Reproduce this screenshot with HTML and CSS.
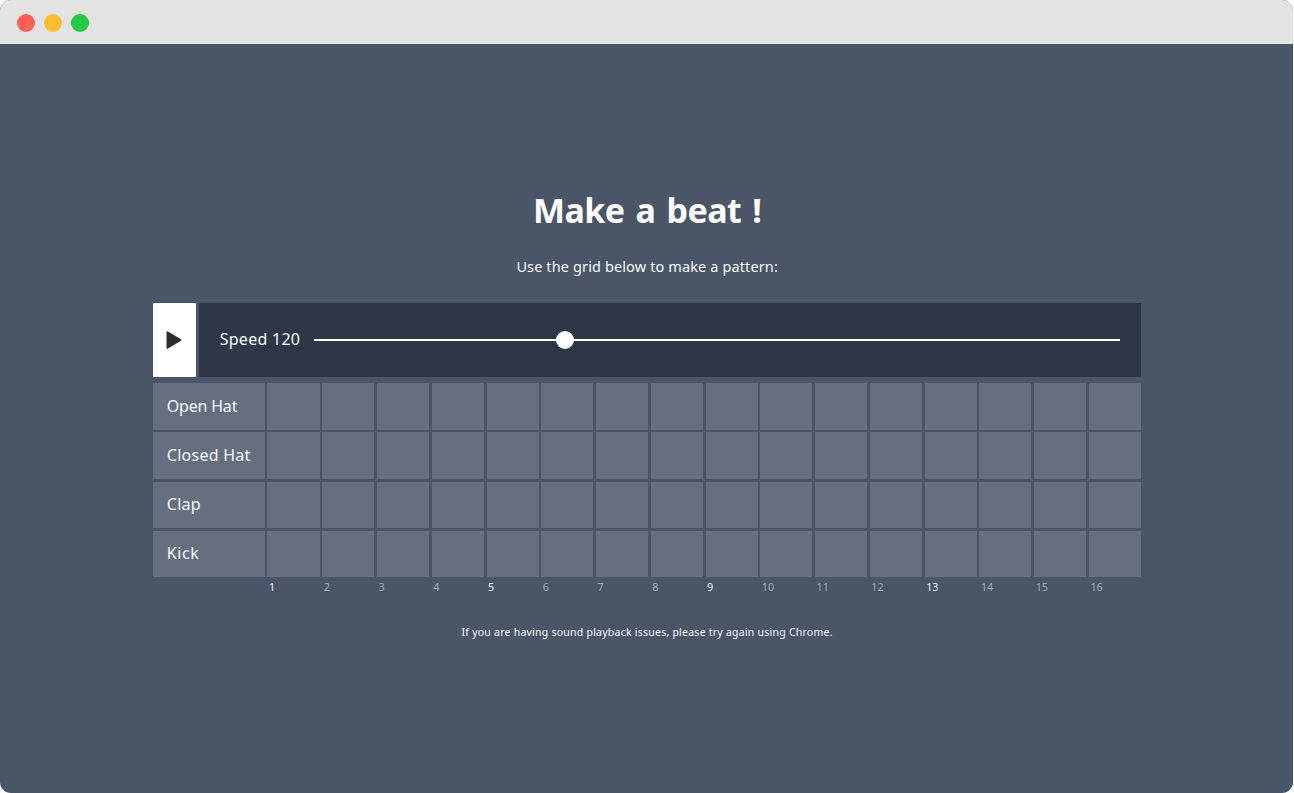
FILE: index.html
```
<!DOCTYPE html>
<html lang="en">
<head>
<meta charset="utf-8">
<title>Make a beat</title>
<link rel="stylesheet" href="styles.css">
</head>
<body>
<div class="window">
  <header class="titlebar">
    <span class="dot dot-close"></span>
    <span class="dot dot-minimize"></span>
    <span class="dot dot-zoom"></span>
  </header>
  <main class="app">
    <h1 class="title">Make a beat !</h1>
    <p class="intro">Use the grid below to make a pattern:</p>
    <section class="controls">
      <button class="play" aria-label="Play"><svg width="16" height="18" viewBox="0 0 16 18"><path d="M1.5 1.3 14.5 9 1.5 16.7Z" fill="#2d2d2d" stroke="#2d2d2d" stroke-width="2" stroke-linejoin="round"/></svg></button>
      <div class="speed">
        <span class="speed-label">Speed 120</span>
        <div class="slider"><span class="thumb"></span></div>
      </div>
    </section>
    <section class="sequencer" id="sequencer"></section>
    <p class="note">If you are having sound playback issues, please try again using Chrome.</p>
  </main>
</div>
<script src="script.js"></script>
</body>
</html>
```
FILE: script.js
```
const sequencer = document.getElementById('sequencer');

function add(row, tag, className, text) {
  const element = document.createElement(tag);
  element.className = className;
  if (text) element.textContent = text;
  row.appendChild(element);
  return element;
}

const tracks = [
  ['Open Hat', 'open-hat'],
  ['Closed Hat', 'closed-hat'],
  ['Clap', 'clap'],
  ['Kick', 'kick'],
];

for (const [name, id] of tracks) {
  const row = add(sequencer, 'div', 'row');
  const label = add(row, 'div', 'track');
  add(label, 'span', 'track-name ' + id, name);
  for (let step = 1; step <= 16; step++) add(row, 'div', 'cell');
}

const numbers = add(sequencer, 'div', 'row numbers');
add(numbers, 'span', 'spacer');
for (let step = 1; step <= 16; step++) {
  add(numbers, 'span', step % 4 === 1 ? 'number downbeat' : 'number', String(step));
}
```
FILE: styles.css
```
* { box-sizing: border-box; }
body {
  margin: 0;
  background: #fff;
  color: #f7fafc;
  font-family: "Noto Sans", "Open Sans", sans-serif;
}
.window {
  width: 1293px;
  height: 793px;
  overflow: hidden;
  border-radius: 11px;
  background: #4a5568;
}
.titlebar {
  display: flex;
  align-items: center;
  gap: 8.6px;
  height: 44px;
  padding: 1px 0 0 17.4px;
  background: #e3e3e3;
}
.dot { width: 18px; height: 18px; border-radius: 50%; }
.dot-close { background: #ff5f57; }
.dot-minimize { background: #febc2e; }
.dot-zoom { background: #28c840; }
.app {
  width: 987.7px;
  margin-left: 153.3px;
  padding-top: 141px;
}
.title {
  margin: 0;
  text-align: center;
  color: #fff;
  font-size: 34px;
  line-height: 50px;
  font-weight: 700;
  letter-spacing: -0.6px;
  word-spacing: 3px;
  white-space: nowrap;
}
.intro {
  margin: 19px 0 25px;
  text-align: center;
  font-size: 14.5px;
  line-height: 24px;
  letter-spacing: 0.12px;
}
.controls { display: flex; gap: 3px; height: 73.6px; }
.play {
  display: flex;
  align-items: center;
  justify-content: center;
  width: 42.4px;
  padding: 0;
  border: 0;
  background: #fff;
}
.speed {
  display: flex;
  flex: 1;
  align-items: center;
  padding: 0 20.5px 0 21px;
  background: #2d3748;
}
.speed-label {
  width: 94.5px;
  padding-bottom: 2px;
  font-size: 16px;
  letter-spacing: 0.27px;
  white-space: nowrap;
}
.slider { position: relative; flex: 1; height: 2px; background: #fff; }
.thumb {
  position: absolute;
  left: 31.1%;
  top: 50%;
  width: 18px;
  height: 18px;
  border-radius: 50%;
  background: #fff;
  transform: translate(-50%, -50%);
}
.sequencer { margin-top: 6.8px; }
.row {
  display: grid;
  grid-template-columns: 111.5px repeat(16, 1fr);
  column-gap: 2.7px;
  height: 46.4px;
  margin-bottom: 2.7px;
}
.track { display: flex; align-items: center; padding: 0 0 1.5px 13.5px; background: #666f80; }
.track-name { font-size: 16px; letter-spacing: 0.25px; white-space: nowrap; }
.open-hat { letter-spacing: -0.2px; }
.kick { letter-spacing: 0.6px; }
.cell { background: #666f80; }
.numbers { height: 20px; margin: -2.7px 0 0; }
.number { padding-left: 1.5px; font-size: 10.8px; line-height: 20px; color: #a5abb5; }
.downbeat { color: #f0f2f4; }
.note {
  margin: 24.6px 0 0;
  text-align: center;
  font-size: 10.5px;
  line-height: 20px;
  letter-spacing: 0.24px;
}
```
